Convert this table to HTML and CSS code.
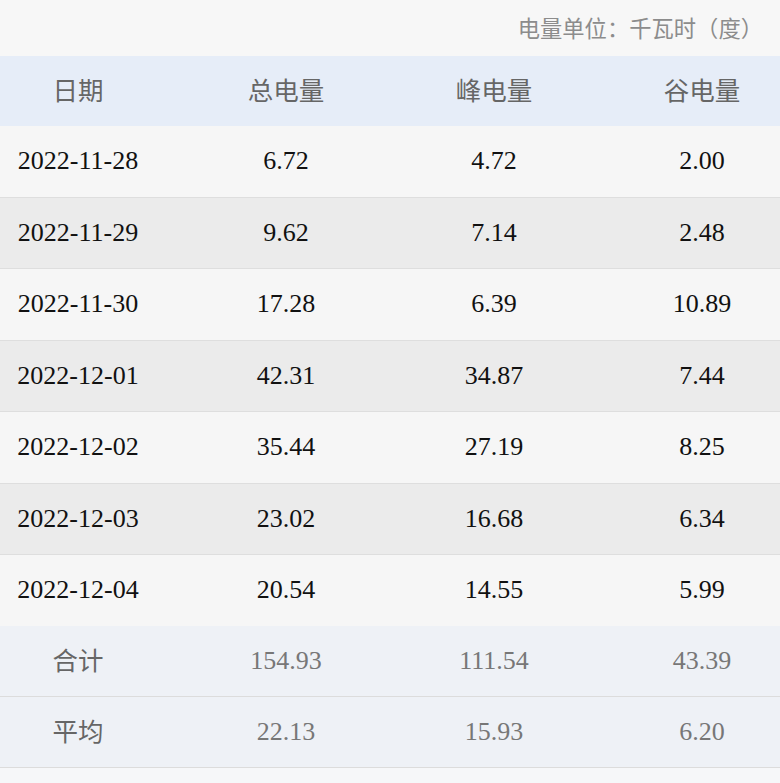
FILE: index.html
```html
<!DOCTYPE html>
<html lang="zh-CN">
<head>
<meta charset="utf-8">
<link rel="stylesheet" href="styles.css">
</head>
<body>
<div class="page">
  <div class="unit">电量单位：千瓦时（度）</div>
  <div class="table">
    <div class="row head">
      <div class="cell first">日期</div><div class="cell">总电量</div><div class="cell">峰电量</div><div class="cell last">谷电量</div>
    </div>
    <div class="row data odd"><div class="cell first">2022-11-28</div><div class="cell">6.72</div><div class="cell">4.72</div><div class="cell last">2.00</div></div>
    <div class="row data even"><div class="cell first">2022-11-29</div><div class="cell">9.62</div><div class="cell">7.14</div><div class="cell last">2.48</div></div>
    <div class="row data odd"><div class="cell first">2022-11-30</div><div class="cell">17.28</div><div class="cell">6.39</div><div class="cell last">10.89</div></div>
    <div class="row data even"><div class="cell first">2022-12-01</div><div class="cell">42.31</div><div class="cell">34.87</div><div class="cell last">7.44</div></div>
    <div class="row data odd"><div class="cell first">2022-12-02</div><div class="cell">35.44</div><div class="cell">27.19</div><div class="cell last">8.25</div></div>
    <div class="row data even"><div class="cell first">2022-12-03</div><div class="cell">23.02</div><div class="cell">16.68</div><div class="cell last">6.34</div></div>
    <div class="row data odd nob"><div class="cell first">2022-12-04</div><div class="cell">20.54</div><div class="cell">14.55</div><div class="cell last">5.99</div></div>
    <div class="row sum"><div class="cell first label">合计</div><div class="cell">154.93</div><div class="cell">111.54</div><div class="cell last">43.39</div></div>
    <div class="row sum"><div class="cell first label">平均</div><div class="cell">22.13</div><div class="cell">15.93</div><div class="cell last">6.20</div></div>
  </div>
</div>
</body>
</html>
```

FILE: styles.css
```css
html, body {
  margin: 0;
  padding: 0;
  background: #f6f7f9;
}
.page {
  width: 780px;
  overflow: hidden;
}
.unit {
  height: 56px;
  box-sizing: border-box;
  display: flex;
  align-items: center;
  justify-content: flex-end;
  padding-right: 17px;
  padding-bottom: 2px;
  background: #f7f7f7;
  color: #8c8c8c;
  font-family: "Noto Sans CJK SC", sans-serif;
  font-size: 22.3px;
}
.table {
  display: flex;
  flex-direction: column;
}
.row {
  display: grid;
  grid-template-columns: 182px 208px 208px 182px;
  align-items: center;
  box-sizing: border-box;
}
.cell {
  text-align: center;
  white-space: nowrap;
}
.cell.first { padding-right: 26px; }
.cell.last { padding-left: 26px; }
.head {
  height: 70px;
  padding-bottom: 6px;
  background: #e6edf8;
  color: #666;
  font-family: "Noto Sans CJK SC", sans-serif;
  font-size: 25.5px;
}
.data {
  height: 71.5px;
  border-bottom: 1px solid #dedede;
  color: #111;
  font-family: "Liberation Serif", "Noto Sans CJK SC", serif;
  font-size: 26px;
}
.data.nob { border-bottom: none; height: 70.5px; }
.odd { background: #f6f6f6; }
.even { background: #ebebeb; }
.sum {
  height: 71px;
  background: #eef1f6;
  border-bottom: 1px solid #dcdcdc;
  color: #777;
  font-family: "Liberation Serif", "Noto Sans CJK SC", serif;
  font-size: 26px;
}
.sum .label {
  padding-bottom: 5px;
  font-family: "Noto Sans CJK SC", sans-serif;
  font-size: 25.5px;
  color: #666;
}
```
